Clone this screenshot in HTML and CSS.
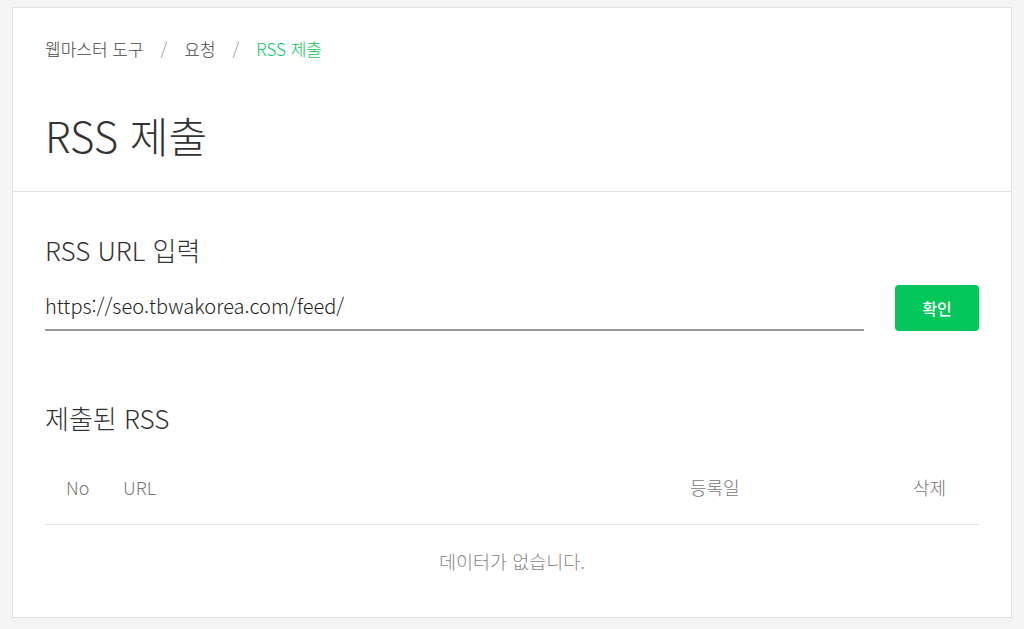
FILE: index.html
```html
<!DOCTYPE html>
<html lang="ko">
<head>
<meta charset="utf-8">
<link rel="stylesheet" href="styles.css">
</head>
<body>
<div class="card">
  <header class="head">
    <nav class="crumbs">
      <span>웹마스터 도구</span><span class="sep">/</span><span>요청</span><span class="sep">/</span><span class="current">RSS 제출</span>
    </nav>
    <h1 class="title">RSS 제출</h1>
  </header>
  <section class="body">
    <h2 class="sub">RSS URL 입력</h2>
    <div class="form-row">
      <div class="input">https://seo.tbwakorea.com/feed/</div>
      <button class="btn">확인</button>
    </div>
    <h2 class="sub sub2">제출된 RSS</h2>
    <div class="table">
      <div class="thead">
        <span class="c-no">No</span>
        <span class="c-url">URL</span>
        <span class="c-date">등록일</span>
        <span class="c-del">삭제</span>
      </div>
      <div class="empty">데이터가 없습니다.</div>
    </div>
  </section>
</div>
</body>
</html>
```
FILE: styles.css
```css
* { box-sizing: border-box; }
html, body { margin: 0; }
body {
  background: #f5f5f5;
  padding: 7px 12px;
  font-family: "Noto Sans CJK KR", "Noto Sans", sans-serif;
  color: #333;
}
.card {
  width: 1000px;
  height: 611px;
  background: #fff;
  border: 1px solid #e3e3e3;
}
.head {
  padding: 28px 32px 0;
  height: 184px;
  border-bottom: 1px solid #e3e3e3;
}
.crumbs {
  font-size: 17px;
  line-height: 26px;
  color: #444;
  display: flex;
  font-weight: 300;
}
.sep { color: #999; margin: 0 17px; }
.current { color: #03c75a; }
.title {
  margin: 46px 0 0;
  font-size: 42px;
  font-weight: 300;
  line-height: 54px;
  color: #333;
}
.body { padding: 40px 32px 0; }
.sub {
  margin: 0;
  font-size: 26px;
  font-weight: 300;
  line-height: 36px;
  color: #333;
}
.sub2 { margin-top: 69px; }
.form-row {
  display: flex;
  align-items: flex-end;
  gap: 31px;
  margin-top: 17px;
}
.input {
  flex: 1;
  height: 46px;
  line-height: 42px;
  font-size: 20px;
  font-weight: 300;
  color: #222;
  border-bottom: 2px solid #999;
}
.btn {
  width: 84px;
  height: 46px;
  background: #03c75a;
  color: #fff;
  border: 0;
  border-radius: 4px;
  font-family: inherit;
  font-size: 16px;
  font-weight: 500;
}
.table { margin-top: 14px; }
.thead {
  display: flex;
  align-items: center;
  height: 75px;
  border-bottom: 1px solid #e3e3e3;
  font-size: 18px;
  font-weight: 300;
  color: #777;
}
.c-no { width: 78px; padding-left: 21px; }
.c-url { flex: 1; }
.c-date { width: 223px; }
.c-del { width: 66px; }
.empty {
  text-align: center;
  font-size: 18.5px;
  font-weight: 300;
  color: #888;
  line-height: 72px;
}
```
